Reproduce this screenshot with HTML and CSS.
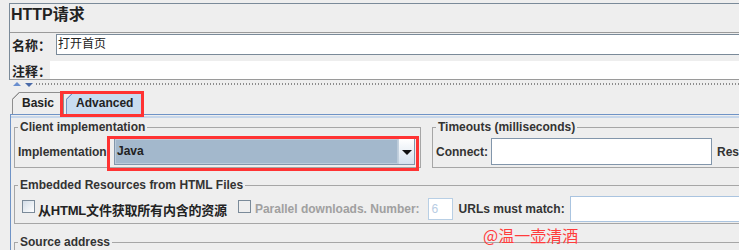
FILE: index.html
```html
<!DOCTYPE html>
<html lang="zh-CN">
<head>
    <meta charset="UTF-8">
    <title>HTTP请求</title>
    <link rel="stylesheet" href="styles.css">
</head>
<body>
    <div class="page">
        <!-- Sampler name / comment -->
        <div class="sampler">
            <div class="title">HTTP请求</div>
            <div class="name-row">
                <span class="row-label name-label">名称：</span>
                <div class="text-field name-field">打开首页</div>
            </div>
            <div class="note-row">
                <span class="row-label note-label">注释：</span>
                <div class="note-field"></div>
            </div>
        </div>

        <!-- Split pane divider -->
        <div class="splitter">
            <span class="arrow-up"></span>
            <span class="arrow-down"></span>
            <span class="dots"></span>
        </div>

        <!-- Tabs -->
        <div class="tab-bar">
            <div class="tab">Basic</div>
            <div class="tab selected">Advanced</div>
            <span class="mark tab-mark"></span>
        </div>

        <div class="tab-panel">
            <div class="group-row">
                <fieldset class="group client-group">
                    <legend>Client implementation</legend>
                    <div class="field-row">
                        <span class="impl-label">Implementation</span>
                        <div class="combo">
                            <div class="combo-value">Java</div>
                            <div class="combo-button"><span class="combo-arrow"></span></div>
                            <span class="mark combo-mark"></span>
                        </div>
                    </div>
                </fieldset>
                <fieldset class="group timeout-group">
                    <legend>Timeouts (milliseconds)</legend>
                    <div class="field-row">
                        <span class="connect-label">Connect:</span>
                        <div class="text-field connect-field"></div>
                        <span class="response-label">Response:</span>
                        <div class="text-field response-field"></div>
                    </div>
                </fieldset>
            </div>

            <fieldset class="group embedded-group">
                <legend>Embedded Resources from HTML Files</legend>
                <div class="field-row">
                    <span class="check"></span>
                    <span class="check-label cjk-label">从HTML文件获取所有内含的资源</span>
                    <span class="check disabled"></span>
                    <span class="check-label disabled-label">Parallel downloads. Number:</span>
                    <div class="text-field number-field">6</div>
                    <span class="urls-label">URLs must match:</span>
                    <div class="text-field urls-field"></div>
                </div>
            </fieldset>

            <fieldset class="group source-group">
                <legend>Source address</legend>
                <div class="field-row"></div>
            </fieldset>
        </div>

        <div class="watermark">@温一壶清酒</div>
    </div>
</body>
</html>
```

FILE: styles.css
```css
* {
    margin: 0;
    padding: 0;
    box-sizing: border-box;
}

body {
    background: #eeeeee;
    font-family: 'Liberation Sans', 'Noto Sans CJK SC', sans-serif;
    font-size: 12px;
    color: #333;
    overflow: hidden;
}

.page {
    position: relative;
    width: 739px;
    height: 250px;
    overflow: hidden;
}

/* Name / comment block */
.sampler {
    margin: 3px 0 0 9px;
    border-top: 1px solid #7a8a99;
    border-left: 1px solid #7a8a99;
}

.title {
    height: 29px;
    padding: 1px 0 0 1px;
    font-size: 16px;
    font-weight: bold;
    line-height: 20px;
    color: #222;
    border-bottom: 1px solid #9a9a9a;
}

.name-row {
    display: flex;
    align-items: center;
    height: 22px;
    padding-top: 1px;
}

.row-label {
    padding-left: 2px;
    font-size: 13px;
    font-weight: bold;
    color: #222;
    white-space: nowrap;
    flex: none;
}

.name-label {
    width: 46px;
}

.note-label {
    width: 40px;
}

.text-field {
    background: #fff;
    border: 1px solid #7a8a99;
}

.name-field {
    flex: 1;
    height: 21px;
    padding-left: 1px;
    line-height: 19px;
    border-right: none;
    color: #222;
}

.note-row {
    display: flex;
    align-items: center;
    height: 25px;
    padding-top: 6px;
    border-bottom: 1px solid #9a9a9a;
}

.note-field {
    position: relative;
    flex: 1;
    height: 18px;
    background: #fff;
}

/* Divider */
.splitter {
    display: flex;
    align-items: center;
    height: 8px;
    padding-left: 13px;
}

.arrow-up {
    border-left: 4px solid transparent;
    border-right: 4px solid transparent;
    border-bottom: 4px solid #6a8fcf;
    margin-top: -1px;
}

.arrow-down {
    margin-left: 4px;
    border-left: 4px solid transparent;
    border-right: 4px solid transparent;
    border-top: 4px solid #4a6aa8;
    margin-top: 1px;
}

.dots {
    flex: 1;
    height: 2px;
    margin-left: 3px;
    background-image: repeating-linear-gradient(90deg, #8c8c8c 0 1px, transparent 1px 3px);
}

/* Tabs */
.tab-bar {
    position: relative;
    display: flex;
    align-items: flex-end;
    height: 26px;
    padding-left: 12px;
}

.tab {
    height: 22px;
    padding: 0 9px;
    line-height: 21px;
    font-weight: bold;
    color: #222;
    border: 1px solid #8e8e8e;
    border-bottom: none;
    background: linear-gradient(135deg, transparent 4.9px, #8e8e8e 4.9px, #8e8e8e 5.8px, #eeeeee 5.8px) border-box;
    clip-path: polygon(7px 0, 100% 0, 100% 100%, 0 100%, 0 7px);
}

.tab.selected {
    margin-left: 2px;
    border-color: #6f93c6;
    background: linear-gradient(135deg, transparent 4.9px, #6f93c6 4.9px, #6f93c6 5.8px, #c8dcf0 5.8px) border-box;
}

.mark {
    position: absolute;
    border: 3px solid #ff3333;
}

.tab-mark {
    left: 60px;
    top: 3px;
    width: 84px;
    height: 26px;
}

.tab-panel {
    margin-left: 10px;
    padding: 5px 0 0 3px;
    border-top: 1px solid #6f93c6;
    border-left: 1px solid #6f93c6;
    box-shadow: inset 0 1px 0 #eeeeee, inset 0 3px 0 #c6d6ea;
    height: 200px;
}

/* Titled groups */
.group {
    border: 1px solid #a6a6a6;
    padding: 4px 5px 2px 3px;
    flex: none;
}

.group legend {
    padding: 0 2px;
    line-height: 14px;
    font-weight: bold;
    color: #333;
}

.group-row {
    display: flex;
    align-items: flex-start;
}

.field-row {
    display: flex;
    align-items: center;
    white-space: nowrap;
}

.client-group {
    width: 407px;
}

.impl-label {
    width: 96px;
    font-weight: bold;
    flex: none;
}

.combo {
    position: relative;
    display: flex;
    width: 301px;
    height: 27px;
    border: 1px solid #8296ab;
}

.combo-value {
    flex: 1;
    padding-left: 2px;
    line-height: 25px;
    font-weight: bold;
    color: #222;
    background: #a3b8cc;
    box-shadow: inset 0 0 0 1px #bccbda;
}

.combo-button {
    width: 16px;
    display: flex;
    align-items: center;
    justify-content: center;
    background: linear-gradient(#ffffff, #d6e2ee);
    border-left: 1px solid #c3d1de;
}

.combo-arrow {
    border-left: 5px solid transparent;
    border-right: 5px solid transparent;
    border-top: 5px solid #111;
    margin-top: 2px;
}

.combo-mark {
    left: -8px;
    top: -3px;
    right: -5px;
    bottom: -7px;
}

.timeout-group {
    width: 420px;
    margin-left: 11px;
}

.connect-label,
.response-label,
.urls-label {
    font-weight: bold;
    flex: none;
}

.connect-field {
    width: 221px;
    height: 27px;
    margin-left: 3px;
    border-color: #8296ab;
    flex: none;
}

.response-label {
    margin-left: 5px;
}

.response-field {
    width: 100px;
    height: 27px;
    margin-left: 4px;
    flex: none;
}

.embedded-group {
    width: 800px;
    margin-top: 10px;
    padding-bottom: 1px;
}

.embedded-group .field-row {
    height: 26px;
}

.check {
    width: 13px;
    height: 13px;
    margin: 0 0 5px 4px;
    border: 1px solid #7a8a99;
    background: linear-gradient(135deg, #d3dde8, #ffffff);
    flex: none;
}

.check.disabled {
    margin-left: 11px;
    background: #eeeeee;
}

.check-label {
    margin-left: 3px;
    font-weight: bold;
    color: #222;
}

.cjk-label {
    font-size: 13px;
    letter-spacing: -0.2px;
}

.disabled-label {
    margin-left: 4px;
    color: #a0a0a0;
}

.number-field {
    width: 25px;
    height: 22px;
    margin-left: 8px;
    padding-left: 3px;
    line-height: 20px;
    color: #b8cce3;
    border-color: #b8cfe5;
    flex: none;
}

.urls-label {
    margin-left: 6px;
}

.urls-field {
    width: 220px;
    height: 26px;
    margin-left: 5px;
    border-color: #aac4e0;
    flex: none;
}

.source-group {
    width: 800px;
    margin-top: 11px;
}

.source-group .field-row {
    height: 30px;
}

.watermark {
    position: absolute;
    left: 483px;
    top: 226px;
    font-family: 'Noto Sans CJK SC', sans-serif;
    font-size: 16px;
    line-height: 18px;
    color: #ff3c3c;
}
```
